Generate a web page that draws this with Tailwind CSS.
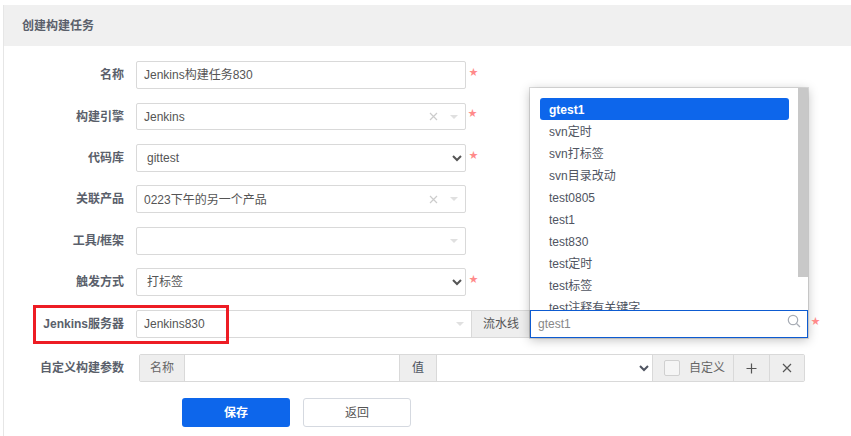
<!DOCTYPE html>
<html lang="zh-CN">
  <head>
    <meta charset="UTF-8" />
    <title>创建构建任务</title>
    <script src="https://cdn.jsdelivr.net/npm/@tailwindcss/browser@4"></script>
  </head>
  <body class="bg-white font-['Liberation_Sans','Noto_Sans_CJK_SC',sans-serif] text-[12px] text-[#4f5461]">
    <div class="relative w-[851px] h-[436px] overflow-hidden pl-[3px] pt-[5px]">
      <div class="border-l border-[#e6e6e6] h-full">
        <div class="h-[41px] bg-[#f0f0f0] flex items-center pl-[18px] font-bold text-[#5a5f6b]">创建构建任务</div>

        <div class="pt-[15px]">
          <!-- 名称 -->
          <div class="flex h-[28px] items-center mb-[14px]">
            <label class="w-[120px] text-right font-bold text-[#5a5f6b] pr-[8px] box-content shrink-0 mr-[4px]">名称</label>
            <div class="w-[330px] h-[28px] border border-[#d9d9d9] rounded-[2px] flex items-center pl-[7px] text-[#555]">Jenkins构建任务830</div>
            <span class="ml-[3px] mt-[-5px] text-[#ff8a8a] text-[9px]">★</span>
          </div>
          <!-- 构建引擎 -->
          <div class="flex h-[27px] items-center mb-[14px]">
            <label class="w-[120px] text-right font-bold text-[#5a5f6b] pr-[8px] box-content shrink-0 mr-[4px]">构建引擎</label>
            <div class="w-[330px] h-[27px] border border-[#d9d9d9] rounded-[2px] flex items-center pl-[7px] text-[#555]">
              <span class="flex-1">Jenkins</span>
              <svg class="mr-[12px]" width="9" height="9" viewBox="0 0 9 9"><path d="M1 1l7 7M8 1L1 8" stroke="#ccc" stroke-width="1.2" /></svg>
              <span class="w-0 h-0 mr-[7px] border-x-[4px] border-x-transparent border-t-[4px] border-t-[#e0e0e0]"></span>
            </div>
            <span class="ml-[2px] mt-[-5px] text-[#ff8a8a] text-[9px]">★</span>
          </div>
          <!-- 代码库 -->
          <div class="flex h-[28px] items-center mb-[13px]">
            <label class="w-[120px] text-right font-bold text-[#5a5f6b] pr-[8px] box-content shrink-0 mr-[4px]">代码库</label>
            <select class="w-[330px] h-[28px] border border-[#d9d9d9] rounded-[2px] pl-[6px] text-[12px] text-[#555] bg-white appearance-auto">
              <option>gittest</option>
            </select>
            <span class="ml-[3px] mt-[-5px] text-[#ff8a8a] text-[9px]">★</span>
          </div>
          <!-- 关联产品 -->
          <div class="flex h-[28px] items-center mb-[14px]">
            <label class="w-[120px] text-right font-bold text-[#5a5f6b] pr-[8px] box-content shrink-0 mr-[4px]">关联产品</label>
            <div class="w-[330px] h-[28px] border border-[#d9d9d9] rounded-[2px] flex items-center pl-[7px] text-[#555]">
              <span class="flex-1 pt-[2px]">0223下午的另一个产品</span>
              <svg class="mr-[12px]" width="9" height="9" viewBox="0 0 9 9"><path d="M1 1l7 7M8 1L1 8" stroke="#ccc" stroke-width="1.2" /></svg>
              <span class="w-0 h-0 mr-[7px] border-x-[4px] border-x-transparent border-t-[4px] border-t-[#e0e0e0]"></span>
            </div>
          </div>
          <!-- 工具/框架 -->
          <div class="flex h-[28px] items-center mb-[13px]">
            <label class="w-[120px] text-right font-bold text-[#5a5f6b] pr-[8px] box-content shrink-0 mr-[4px]">工具/框架</label>
            <div class="w-[330px] h-[28px] border border-[#d9d9d9] rounded-[2px] flex items-center justify-end">
              <span class="w-0 h-0 mr-[7px] border-x-[4px] border-x-transparent border-t-[4px] border-t-[#e0e0e0]"></span>
            </div>
          </div>
          <!-- 触发方式 -->
          <div class="flex h-[28px] items-center mb-[14px]">
            <label class="w-[120px] text-right font-bold text-[#5a5f6b] pr-[8px] box-content shrink-0 mr-[4px]">触发方式</label>
            <select class="w-[330px] h-[28px] border border-[#d9d9d9] rounded-[2px] pl-[6px] text-[12px] text-[#555] bg-white appearance-auto">
              <option>打标签</option>
            </select>
            <span class="ml-[3px] mt-[-5px] text-[#ff8a8a] text-[9px]">★</span>
          </div>
          <!-- Jenkins服务器 -->
          <div class="flex h-[28px] items-center mb-[16px]">
            <label class="w-[120px] text-right font-bold text-[#5a5f6b] pr-[8px] box-content shrink-0 mr-[4px]">Jenkins服务器</label>
            <div class="w-[336px] h-[28px] border border-[#d9d9d9] rounded-l-[2px] flex items-center pl-[7px] text-[#555]">
              <span class="flex-1">Jenkins830</span>
              <span class="w-0 h-0 mr-[7px] border-x-[4px] border-x-transparent border-t-[4px] border-t-[#e0e0e0]"></span>
            </div>
            <div class="w-[59px] h-[28px] bg-[#eeeeee] border border-[#d9d9d9] ml-[-1px] flex items-center pl-[11px] text-[#555]">流水线</div>
          </div>
          <!-- 自定义构建参数 -->
          <div class="flex h-[28px] items-center mb-[16px]">
            <label class="w-[120px] text-right font-bold text-[#5a5f6b] pr-[8px] box-content shrink-0 mr-[7px]">自定义构建参数</label>
            <div class="flex h-[28px] w-[666px] border border-[#d9d9d9] rounded-[2px]">
              <div class="w-[45px] bg-[#eeeeee] flex items-center justify-center text-[#666] border-r border-[#d9d9d9]">名称</div>
              <div class="w-[215px] border-r border-[#d9d9d9]"></div>
              <div class="w-[37px] bg-[#eeeeee] flex items-center justify-center border-r border-[#d9d9d9]">值</div>
              <select class="w-[215px] h-full bg-white appearance-auto text-[12px]"><option></option></select>
              <div class="flex-1 bg-[#eeeeee] flex items-center border-l border-[#d9d9d9]">
                <span class="ml-[11px] w-[16px] h-[16px] border border-[#d0d0d0] rounded-[2px] bg-[#f5f5f5]"></span>
                <span class="ml-[9px] flex-1 text-[#666]">自定义</span>
                <div class="w-[36px] h-full border-l border-[#d9d9d9] flex items-center justify-center">
                  <svg width="11" height="11" viewBox="0 0 11 11"><path d="M5.5 0.5v10M0.5 5.5h10" stroke="#555" stroke-width="1.2" /></svg>
                </div>
                <div class="w-[35px] h-full border-l border-[#d9d9d9] flex items-center justify-center">
                  <svg width="10" height="10" viewBox="0 0 10 10"><path d="M1 1l8 8M9 1L1 9" stroke="#555" stroke-width="1.2" /></svg>
                </div>
              </div>
            </div>
          </div>
          <!-- 按钮 -->
          <div class="flex pl-[178px] gap-[13px]">
            <button class="w-[108px] h-[29px] rounded-[3px] bg-[#0d66eb] text-white font-bold text-[12px]">保存</button>
            <button class="w-[108px] h-[29px] rounded-[3px] bg-white border border-[#d5d9e0] text-[#555] text-[12px]">返回</button>
          </div>
        </div>
      </div>

      <!-- 红框 -->
      <div class="absolute left-[33px] top-[305px] w-[196px] h-[39px] border-[3px] border-[#ed1c24]"></div>

      <!-- 流水线下拉 -->
      <div class="absolute left-[530px] top-[88px] w-[278px] h-[250px] bg-white shadow-[0_0_0_1px_rgba(0,0,0,0.12),0_2px_10px_rgba(0,0,0,0.25)]">
        <div class="h-[222px] overflow-hidden relative pt-[10px] pl-[10px]">
          <div class="w-[249px] h-[22px] bg-[#0d66eb] rounded-[3px] text-white font-bold flex items-center pl-[9px] pt-[2px]">gtest1</div>
          <div class="h-[22px] flex items-center pl-[9px] pt-[2px]">svn定时</div>
          <div class="h-[22px] flex items-center pl-[9px] pt-[2px]">svn打标签</div>
          <div class="h-[22px] flex items-center pl-[9px] pt-[2px]">svn目录改动</div>
          <div class="h-[22px] flex items-center pl-[9px] pt-[2px]">test0805</div>
          <div class="h-[22px] flex items-center pl-[9px] pt-[2px]">test1</div>
          <div class="h-[22px] flex items-center pl-[9px] pt-[2px]">test830</div>
          <div class="h-[22px] flex items-center pl-[9px] pt-[2px]">test定时</div>
          <div class="h-[22px] flex items-center pl-[9px] pt-[2px]">test标签</div>
          <div class="h-[22px] flex items-center pl-[9px] pt-[2px]">test注释有关键字</div>
          <div class="absolute right-0 top-0 w-[10px] h-[189px] bg-[#c8c8c8]"></div>
        </div>
        <div class="h-[28px] border border-[#0d5bd1] flex items-center pl-[7px] text-[#888]">
          <span class="flex-1">gtest1</span>
          <svg class="mr-[6px] mb-[6px]" width="14" height="14" viewBox="0 0 14 14" fill="none"><circle cx="6" cy="6" r="4.7" stroke="#a8adb5" stroke-width="1.2" /><path d="M9.5 9.5l3.5 3.5" stroke="#a8adb5" stroke-width="1.2" /></svg>
        </div>
      </div>
      <span class="absolute left-[811px] top-[315px] text-[#ff8a8a] text-[9px]">★</span>
    </div>
  </body>
</html>
